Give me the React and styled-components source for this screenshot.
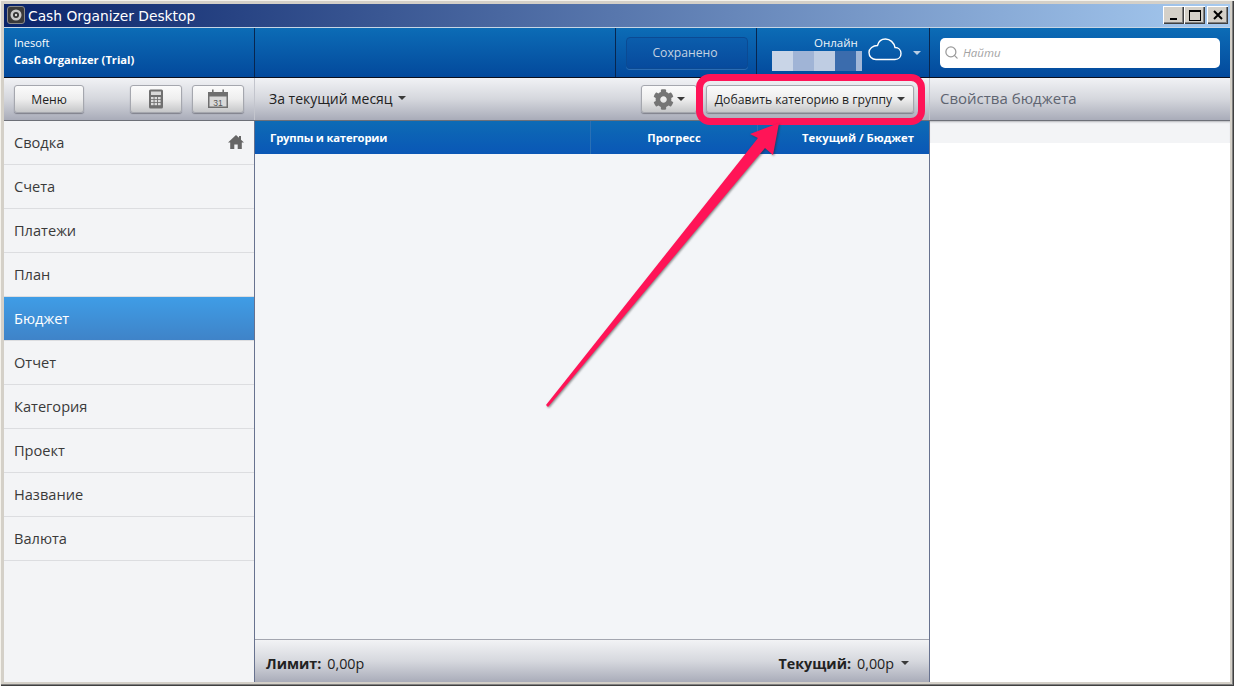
import React from 'react'
import styled, { createGlobalStyle } from 'styled-components'
import { FaCog } from 'react-icons/fa'
import { Search } from 'lucide-react'

const UI_FONT = `'Open Sans', 'Noto Sans', sans-serif`

const GlobalStyle = createGlobalStyle`
  html, body { margin: 0; padding: 0; background: #d4d0c8; }
  * { box-sizing: border-box; }
  body { font-family: ${UI_FONT}; }
`

const Window = styled.div`
  position: relative;
  width: 1234px;
  height: 686px;
  padding: 4px;
  display: flex;
  flex-direction: column;
  overflow: hidden;
  background: #d4d0c8;
  box-shadow: inset 1px 1px 0 #f4f2ec, inset -1px -1px 0 #404040, inset -2px -2px 0 #808080;
`

const TitleBar = styled.div`
  height: 24px;
  flex: none;
  display: flex;
  align-items: center;
  padding: 0 2px 1px 3px;
  border-bottom: 1px solid #c6d6e6;
  background: linear-gradient(90deg, #0a246a 0%, #a6caf0 100%);
`

const AppIcon = styled.svg`
  width: 18px;
  height: 18px;
  flex: none;
`

const TitleText = styled.span`
  margin-left: 3px;
  padding-top: 2px;
  flex: 1;
  color: #fff;
  font: 13.8px 'DejaVu Sans', sans-serif;
`

const WinButton = styled.button`
  width: 21px;
  height: 18px;
  margin-left: ${(p) => p.gap || 0}px;
  padding: 0;
  display: flex;
  align-items: center;
  justify-content: center;
  background: #d4d0c8;
  border: 0;
  box-shadow: inset 1px 1px 0 #fff, inset -1px -1px 0 #404040, inset -2px -2px 0 #808080;
`

const HeaderBar = styled.div`
  height: 50px;
  flex: none;
  display: flex;
  background: linear-gradient(180deg, #0c6cb6 0%, #03499c 100%);
  border-bottom: 1px solid #0b0f1e;
`

const HeaderCell = styled.div`
  width: ${(p) => p.w}px;
  flex: none;
  display: flex;
  align-items: center;
  border-right: ${(p) => (p.last ? 'none' : '1px solid #08264f')};
`

const Brand = styled(HeaderCell)`
  flex-direction: column;
  align-items: flex-start;
  padding: 6px 0 0 10px;
  color: #fff;
  font-size: 11px;
  line-height: 17px;
`

const BrandName = styled.b`
  font-size: 11.2px;
`

const SavedBadge = styled.div`
  width: 122px;
  height: 32px;
  margin-left: 10px;
  padding-right: 4px;
  display: flex;
  align-items: center;
  justify-content: center;
  color: #c3d2e2;
  font-size: 12.2px;
  border-radius: 4px;
  border: 1px solid #0b4a93;
  background: linear-gradient(180deg, #0b5dac 0%, #074a9d 100%);
  box-shadow: 0 1px 0 #2a6cb4;
`

const OnlineCell = styled(HeaderCell)`
  padding-left: 15px;
`

const OnlineInfo = styled.div`
  width: 90px;
  display: flex;
  flex-direction: column;
  color: #eef3f8;
  font-size: 11.5px;
  line-height: 16px;
  padding-top: 1px;
`

const OnlineLabel = styled.span`
  margin-left: 42px;
`

const Blur = styled.div`
  display: flex;
  width: 90px;
  height: 20px;
`

const BlurTile = styled.div`
  width: ${(p) => p.w}px;
  background: ${(p) => p.color};
`

const CloudIcon = styled.svg`
  width: 34px;
  height: 24px;
  flex: none;
  margin: -7px 0 0 6px;
`

const SmallCaret = styled.span`
  display: inline-block;
  width: 0;
  height: 0;
  margin-left: ${(p) => p.gap ?? 5}px;
  border-left: 4px solid transparent;
  border-right: 4px solid transparent;
  border-top: 4px solid ${(p) => p.color || '#3a3a3a'};
`

const SearchBox = styled.div`
  width: 280px;
  height: 30px;
  margin-left: 10px;
  display: flex;
  align-items: center;
  gap: 4px;
  padding-left: 4px;
  border-radius: 5px;
  background: #fff;
  color: #a3a3a3;
  font-size: 11.5px;
  font-style: italic;
`

const Toolbar = styled.div`
  height: 43px;
  flex: none;
  display: flex;
  background: linear-gradient(180deg, #f1f2f5 0%, #d5d7dd 50%, #a9acb9 100%);
  border-bottom: 1px solid #6d7078;
`

const ToolSection = styled.div`
  width: ${(p) => p.w}px;
  flex: ${(p) => (p.w ? 'none' : '1')};
  display: flex;
  align-items: center;
  padding: 0 ${(p) => p.right || 0}px 0 ${(p) => p.left || 0}px;
  border-right: ${(p) => (p.last ? 'none' : '1px solid #c3c5cd')};
`

const ToolButton = styled.button`
  width: ${(p) => p.w}px;
  height: 28px;
  flex: none;
  margin-left: ${(p) => p.gap || 0}px;
  padding: 0;
  display: flex;
  align-items: center;
  justify-content: center;
  font-family: ${UI_FONT};
  font-size: 12.2px;
  color: #1e1e1e;
  border: 1px solid #a5a7ae;
  border-radius: 3px;
  background: linear-gradient(180deg, #fbfbfb 0%, #eeeeee 50%, #c6c7c9 100%);
  box-shadow: 0 1px 1px rgba(60, 60, 70, 0.45);
`

const PeriodLabel = styled.span`
  flex: 1;
  display: flex;
  align-items: center;
  padding-bottom: 2px;
  color: #222;
  font-size: 14px;
`

const PropsTitle = styled.span`
  padding-bottom: 2px;
  color: #5e6470;
  font-size: 15px;
`

const Body = styled.div`
  flex: 1;
  min-height: 0;
  display: flex;
`

const Sidebar = styled.nav`
  width: 251px;
  flex: none;
  background: #f3f4f6;
  border-right: 1px solid #67728f;
`

const NavItem = styled.div`
  height: 44px;
  display: flex;
  align-items: center;
  justify-content: space-between;
  padding: 0 10px 2px;
  font-size: 14.6px;
  color: ${(p) => (p.active ? '#fff' : '#3a3a3a')};
  border-bottom: 1px solid #dcdde0;
  background: ${(p) => (p.active ? 'linear-gradient(180deg, #3f9de6 0%, #3f83c8 100%)' : 'transparent')};
`

const HomeIcon = styled.svg`
  width: 16px;
  height: 16px;
  flex: none;
`

const Main = styled.main`
  width: 675px;
  flex: none;
  display: flex;
  flex-direction: column;
  background: #f3f5f8;
  border-right: 1px solid #67728f;
`

const TableHead = styled.div`
  height: 33px;
  flex: none;
  display: flex;
  align-items: center;
  color: #fff;
  font-size: 11.3px;
  font-weight: 700;
  background: linear-gradient(180deg, #0d6bb5 0%, #0a57b6 100%);
`

const HeadCol = styled.div`
  width: ${(p) => p.w}px;
  height: 100%;
  display: flex;
  align-items: center;
  justify-content: ${(p) => p.justify || 'flex-start'};
  padding: 0 ${(p) => p.right || 0}px 0 ${(p) => p.left || 0}px;
  letter-spacing: ${(p) => p.spacing || 0}px;
  border-right: ${(p) => (p.line ? '1px solid #2a70b5' : 'none')};
`

const TableBody = styled.div`
  flex: 1;
`

const Footer = styled.div`
  height: 43px;
  flex: none;
  display: flex;
  align-items: center;
  justify-content: space-between;
  padding: 4px 20px 0 11px;
  color: #222;
  font-size: 14.3px;
  border-top: 1px solid #a3a6b0;
  background: linear-gradient(180deg, #f2f3f5 0%, #d6d8de 50%, #a9acb9 100%);
`

const Total = styled.span`
  display: flex;
  align-items: center;
  gap: 6px;
`

const PropsPanel = styled.aside`
  flex: 1;
  background: #fff;
`

const PropsStrip = styled.div`
  height: 22px;
  background: #f3f4f6;
  box-shadow: inset 0 2px 2px -1px rgba(90, 90, 100, 0.4);
`

const Highlight = styled.div`
  position: absolute;
  left: 696px;
  top: 74px;
  width: 229px;
  height: 51px;
  border: 7px solid #ff1457;
  border-radius: 14px;
`

const ArrowLayer = styled.svg`
  position: absolute;
  left: 0;
  top: 0;
  pointer-events: none;
  filter: drop-shadow(1px 1px 1px rgba(40, 40, 40, 0.55));
`

const CalcIcon = () => (
  <svg width="16" height="20" viewBox="0 0 16 20">
    <rect x="1" y="0.5" width="14" height="19" rx="1.5" fill="#6f6f6f" />
    <rect x="3" y="2.5" width="10" height="3.5" fill="#d8d8d8" />
    {[8, 11, 14].map((y) => [3, 6.5, 10].map((x) => (
      <rect key={`${x}-${y}`} x={x} y={y} width="2.6" height="2.2" fill="#dcdcdc" />
    )))}
  </svg>
)

const CalendarIcon = () => (
  <svg width="22" height="20" viewBox="0 0 22 20">
    <rect x="1" y="3" width="20" height="16" fill="#6f6f6f" />
    <rect x="2.5" y="7.5" width="17" height="10" fill="#d9d9d9" />
    <rect x="5" y="0.5" width="1.6" height="5" fill="#6f6f6f" />
    <rect x="15.4" y="0.5" width="1.6" height="5" fill="#6f6f6f" />
    <text x="11" y="16.5" textAnchor="middle" fontSize="8.5" fontFamily="Liberation Sans, sans-serif" fill="#555">31</text>
  </svg>
)

const SafeIcon = () => (
  <AppIcon viewBox="0 0 18 18">
    <rect x="0.5" y="0.5" width="17" height="17" rx="2.5" fill="#3a3a3a" stroke="#8a8a8a" />
    <circle cx="9" cy="9" r="5.5" fill="#c8c8c8" />
    <circle cx="9" cy="9" r="3" fill="#333" />
    <circle cx="9" cy="9" r="1.2" fill="#ddd" />
  </AppIcon>
)

const navItems = ['Сводка', 'Счета', 'Платежи', 'План', 'Бюджет', 'Отчет', 'Категория', 'Проект', 'Название', 'Валюта']

const blurTiles = [
  [21, '#c9d5e7'],
  [21, '#a0b4d6'],
  [21, '#bfcde3'],
  [21, '#3b6cad'],
  [6, '#a2b7d8'],
]

export default function App() {
  return (
    <Window>
      <GlobalStyle />
      <TitleBar>
        <SafeIcon />
        <TitleText>Cash Organizer Desktop</TitleText>
        <WinButton>
          <svg width="10" height="10"><rect x="1" y="8" width="7" height="2" fill="#000" /></svg>
        </WinButton>
        <WinButton>
          <svg width="12" height="11"><rect x="0.5" y="1" width="11" height="9.5" fill="none" stroke="#000" /><rect x="0" y="0" width="12" height="2" fill="#000" /></svg>
        </WinButton>
        <WinButton gap={2}>
          <svg width="10" height="10"><path d="M1 1 L9 9 M9 1 L1 9" stroke="#000" strokeWidth="2" /></svg>
        </WinButton>
      </TitleBar>

      <HeaderBar>
        <Brand w={251}>
          <span>Inesoft</span>
          <BrandName>Cash Organizer (Trial)</BrandName>
        </Brand>
        <HeaderCell w={361} />
        <HeaderCell w={141}>
          <SavedBadge>Сохранено</SavedBadge>
        </HeaderCell>
        <OnlineCell w={173}>
          <OnlineInfo>
            <OnlineLabel>Онлайн</OnlineLabel>
            <Blur>
              {blurTiles.map(([w, color]) => <BlurTile key={color} w={w} color={color} />)}
            </Blur>
          </OnlineInfo>
          <CloudIcon viewBox="0 0 34 24">
            <path d="M8 22.5 H27 C31 22.5 33 19.5 33 16.5 C33 13 30.5 10.5 27 10.5 C26 5.5 22 2 17.5 2 C13.5 2 10.5 4.5 9.5 8.5 C5 8.5 1 11.5 1 15.5 C1 19.5 4 22.5 8 22.5 Z" fill="none" stroke="#fff" strokeWidth="1.4" />
          </CloudIcon>
          <SmallCaret gap={11} color="#b9cde4" />
        </OnlineCell>
        <HeaderCell w={300} last>
          <SearchBox>
            <Search size={15} color="#9a9a9a" />
            Найти
          </SearchBox>
        </HeaderCell>
      </HeaderBar>

      <Toolbar>
        <ToolSection w={251} left={10}>
          <ToolButton w={70}>Меню</ToolButton>
          <ToolButton w={52} gap={46}><CalcIcon /></ToolButton>
          <ToolButton w={52} gap={10}><CalendarIcon /></ToolButton>
        </ToolSection>
        <ToolSection w={675} left={14} right={15}>
          <PeriodLabel>За текущий месяц<SmallCaret /></PeriodLabel>
          <ToolButton w={56}>
            <FaCog size={21} color="#757575" />
            <SmallCaret gap={3} />
          </ToolButton>
          <ToolButton w={208} gap={9}>Добавить категорию в группу<SmallCaret /></ToolButton>
        </ToolSection>
        <ToolSection last left={10}>
          <PropsTitle>Свойства бюджета</PropsTitle>
        </ToolSection>
      </Toolbar>

      <Body>
        <Sidebar>
          {navItems.map((item) => (
            <NavItem key={item} active={item === 'Бюджет' || undefined}>
              {item}
              {item === 'Сводка' && (
                <HomeIcon viewBox="0 0 16 16">
                  <path d="M8 1 L11 3.8 V2 H13 V5.7 L16 8.5 H13.8 V15 H9.7 V10.5 H6.3 V15 H2.2 V8.5 H0 Z" fill="#666" />
                </HomeIcon>
              )}
            </NavItem>
          ))}
        </Sidebar>
        <Main>
          <TableHead>
            <HeadCol w={336} left={15} spacing={-0.2} line>Группы и категории</HeadCol>
            <HeadCol w={167} justify="center" line>Прогресс</HeadCol>
            <HeadCol w={171} justify="flex-end" right={15}>Текущий / Бюджет</HeadCol>
          </TableHead>
          <TableBody />
          <Footer>
            <Total><b>Лимит:</b> 0,00р</Total>
            <Total><b>Текущий:</b> 0,00р<SmallCaret gap={1} /></Total>
          </Footer>
        </Main>
        <PropsPanel>
          <PropsStrip />
        </PropsPanel>
      </Body>

      <Highlight />
      <ArrowLayer width="1234" height="686" viewBox="0 0 1234 686">
        <path d="M546 405 L548 407 L765 148 L773 155 L779 123 L750 134 L758 138 Z" fill="#ff1457" />
      </ArrowLayer>
    </Window>
  )
}
